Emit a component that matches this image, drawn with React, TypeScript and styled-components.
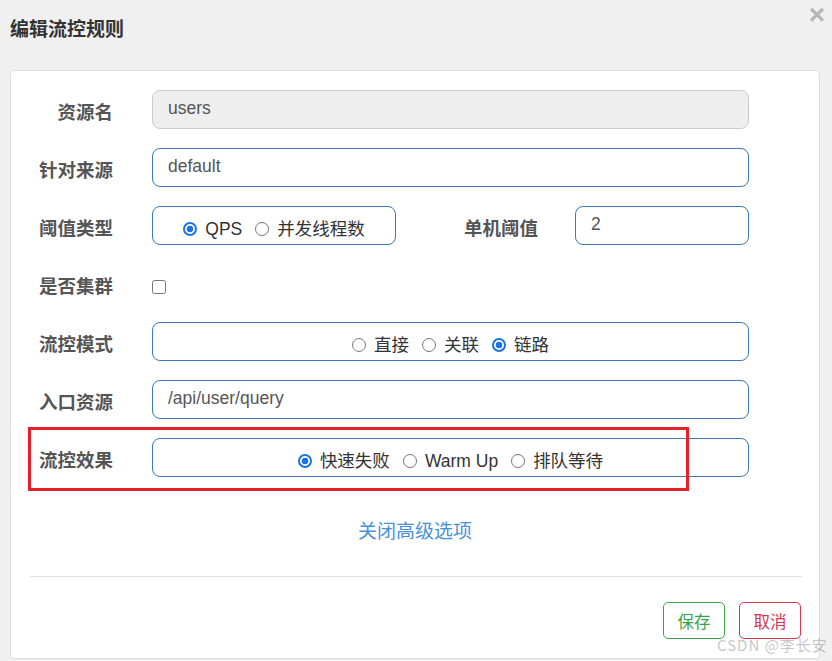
import React, { ReactElement } from 'react';
import styled, { createGlobalStyle } from 'styled-components';

const GlobalStyle = createGlobalStyle`
  html, body {
    margin: 0;
    padding: 0;
    background: #f0f0f0;
    font-family: 'Liberation Sans', 'Noto Sans CJK SC', sans-serif;
  }
`;

type Option = { label: string; checked?: boolean };

const RadioGroup = ({ name, options }: { name: string; options: Option[] }): ReactElement => (
  <RadioBox>
    {options.map((o) => (
      <RadioItem key={o.label}>
        <RadioInput type="radio" name={name} defaultChecked={o.checked} />
        {o.label}
      </RadioItem>
    ))}
  </RadioBox>
);

const App = (): ReactElement => {
  return (
    <Page>
      <GlobalStyle />
      <Header>
        <Title>编辑流控规则</Title>
        <Close>×</Close>
      </Header>
      <Panel>
        <Form>
          <Row>
            <Label>资源名</Label>
            <Input value="users" disabled readOnly />
          </Row>
          <Row>
            <Label>针对来源</Label>
            <Input defaultValue="default" />
          </Row>
          <Row>
            <Label>阈值类型</Label>
            <Field $width={244}>
              <RadioGroup
                name="grade"
                options={[{ label: 'QPS', checked: true }, { label: '并发线程数' }]}
              />
            </Field>
            <Label $width={142}>单机阈值</Label>
            <Input $width={174} defaultValue="2" />
          </Row>
          <Row>
            <Label>是否集群</Label>
            <Check type="checkbox" />
          </Row>
          <Row>
            <Label>流控模式</Label>
            <Field>
              <RadioGroup
                name="strategy"
                options={[{ label: '直接' }, { label: '关联' }, { label: '链路', checked: true }]}
              />
            </Field>
          </Row>
          <Row>
            <Label>入口资源</Label>
            <Input defaultValue="/api/user/query" />
          </Row>
          <Row>
            <Label>流控效果</Label>
            <Field>
              <RadioGroup
                name="behavior"
                options={[{ label: '快速失败', checked: true }, { label: 'Warm Up' }, { label: '排队等待' }]}
              />
            </Field>
            <Highlight />
          </Row>
        </Form>
        <Toggle>关闭高级选项</Toggle>
        <Divider />
        <Footer>
          <Button $color="#3aa34a">保存</Button>
          <Button $color="#d9384c">取消</Button>
        </Footer>
      </Panel>
      <Watermark>CSDN @李长安</Watermark>
    </Page>
  );
};

const Page = styled.div`
  position: relative;
  width: 832px;
  height: 661px;
  overflow: hidden;
`;
const Header = styled.div`
  height: 70px;
  display: flex;
  justify-content: space-between;
  align-items: flex-start;
  padding-left: 10px;
  box-sizing: border-box;
`;
const Title = styled.h3`
  margin: 17px 0 0 0;
  font-family: 'Noto Sans CJK SC', sans-serif;
  font-size: 19px;
  line-height: 22px;
  font-weight: 700;
  color: #333;
`;
const Close = styled.span`
  margin: 0 7px 0 0;
  font-family: 'Liberation Sans', sans-serif;
  font-size: 28px;
  line-height: 30px;
  font-weight: 700;
  color: #b5b5b5;
`;
const Panel = styled.div`
  margin: 0 12px 0 10px;
  height: 589px;
  box-sizing: border-box;
  background: #fff;
  border: 1px solid #ddd;
  border-radius: 4px;
  padding-top: 19px;
`;
const Form = styled.div`
  display: flex;
  flex-direction: column;
  gap: 19px;
`;
const Row = styled.div`
  position: relative;
  display: flex;
  align-items: center;
  height: 39px;
`;
const Label = styled.label<{ $width?: number }>`
  width: ${({ $width }) => $width ?? 102}px;
  margin-right: ${({ $width }) => ($width ? 37 : 39)}px;
  padding-top: 2px;
  text-align: right;
  font-family: 'Noto Sans CJK SC', sans-serif;
  font-size: 18.5px;
  font-weight: 700;
  color: #555;
  flex-shrink: 0;
`;
const Input = styled.input<{ $width?: number }>`
  width: ${({ $width }) => $width ?? 597}px;
  height: 39px;
  box-sizing: border-box;
  padding: 0 15px 2px;
  border: 1px solid #3a7ab8;
  border-radius: 8px;
  font-family: 'Liberation Sans', 'Noto Sans CJK SC', sans-serif;
  font-size: 17.5px;
  color: #555;
  background: #fff;
  outline: none;
  &:disabled {
    background: #eee;
    border-color: #ccc;
    color: #555;
  }
`;
const Field = styled.div<{ $width?: number }>`
  width: ${({ $width }) => $width ?? 597}px;
  height: 39px;
  box-sizing: border-box;
  border: 1px solid #3a7ab8;
  border-radius: 8px;
  display: flex;
  align-items: center;
  justify-content: center;
  flex-shrink: 0;
`;
const RadioBox = styled.div`
  display: flex;
  align-items: center;
  gap: 13px;
  padding-top: 6px;
`;
const RadioItem = styled.label`
  display: flex;
  align-items: center;
  font-family: 'Liberation Sans', 'Noto Sans CJK SC', sans-serif;
  font-size: 17.5px;
  line-height: 24px;
  color: #333;
`;
const RadioInput = styled.input`
  appearance: none;
  width: 14px;
  height: 14px;
  margin: 0 8px 0 0;
  box-sizing: border-box;
  border: 1.5px solid #767676;
  border-radius: 50%;
  background: #fff;
  &:checked {
    border: 2px solid #1a73e8;
    background: radial-gradient(circle, #1a73e8 0 3.2px, #fff 3.6px);
  }
`;
const Check = styled.input`
  width: 14px;
  height: 14px;
  margin: 6px 0 0 0;
`;
const Highlight = styled.div`
  position: absolute;
  left: 17px;
  top: -11px;
  width: 661px;
  height: 64px;
  box-sizing: border-box;
  border: 3px solid #e5202a;
  pointer-events: none;
`;
const Toggle = styled.div`
  margin-top: 40px;
  text-align: center;
  font-family: 'Noto Sans CJK SC', sans-serif;
  font-size: 19px;
  line-height: 25px;
  color: #4a90d6;
`;
const Divider = styled.hr`
  margin: 34px 17px 0 19px;
  border: none;
  border-top: 1px solid #e2e2e2;
`;
const Footer = styled.div`
  display: flex;
  justify-content: flex-end;
  gap: 14px;
  margin: 25px 18px 0 0;
`;
const Button = styled.button<{ $color: string }>`
  width: 62px;
  height: 37px;
  background: #fff;
  border: 1px solid ${({ $color }) => $color};
  border-radius: 5px;
  color: ${({ $color }) => $color};
  font-family: 'Noto Sans CJK SC', sans-serif;
  font-size: 16.5px;
  padding: 0;
`;
const Watermark = styled.span`
  position: absolute;
  left: 717px;
  top: 634px;
  font-family: 'Noto Sans CJK SC', sans-serif;
  font-size: 15px;
  letter-spacing: 1px;
  color: rgba(160, 160, 160, 0.6);
  white-space: nowrap;
`;

export default App;
